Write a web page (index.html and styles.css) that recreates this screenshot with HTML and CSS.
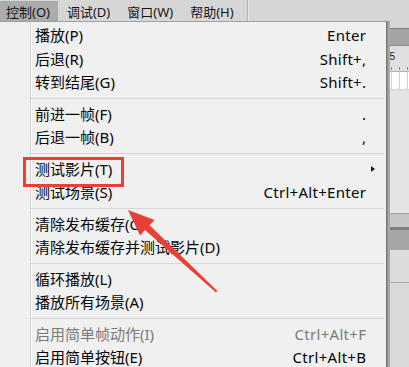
FILE: index.html
```html
<!DOCTYPE html>
<html>
<head>
<meta charset="utf-8">
<link rel="stylesheet" href="styles.css">
</head>
<body>
<div class="app">
  <div class="menubar">
    <div class="mb-item active">控制(O)</div>
    <div class="mb-item">调试(D)</div>
    <div class="mb-item">窗口(W)</div>
    <div class="mb-item">帮助(H)</div>
    <div class="mb-sep"></div>
  </div>
  <div class="workspace">
    <div class="band top"></div>
    <div class="band title"></div>
    <div class="band ruler"><span class="ruler-num">75</span><div class="ticks"></div></div>
    <div class="band cells"></div>
    <div class="band stage"></div>
    <div class="band p1"></div>
    <div class="band p2"></div>
    <div class="band p3"></div>
    <div class="band p4"></div>
  </div>
</div>

<div class="dropdown">
  <div class="item"><span class="label">播放(P)</span><span class="key">Enter</span><span class="sub"></span></div>
  <div class="item"><span class="label">后退(R)</span><span class="key">Shift+,</span><span class="sub"></span></div>
  <div class="item"><span class="label">转到结尾(G)</span><span class="key">Shift+.</span><span class="sub"></span></div>
  <div class="sep"></div>
  <div class="item"><span class="label">前进一帧(F)</span><span class="key">.</span><span class="sub"></span></div>
  <div class="item"><span class="label">后退一帧(B)</span><span class="key">,</span><span class="sub"></span></div>
  <div class="sep"></div>
  <div class="item"><span class="label">测试影片(T)</span><span class="key"></span><span class="sub"><i class="tri"></i></span></div>
  <div class="item"><span class="label">测试场景(S)</span><span class="key">Ctrl+Alt+Enter</span><span class="sub"></span></div>
  <div class="sep"></div>
  <div class="item"><span class="label">清除发布缓存(C)</span><span class="key"></span><span class="sub"></span></div>
  <div class="item"><span class="label">清除发布缓存并测试影片(D)</span><span class="key"></span><span class="sub"></span></div>
  <div class="sep"></div>
  <div class="item"><span class="label">循环播放(L)</span><span class="key"></span><span class="sub"></span></div>
  <div class="item"><span class="label">播放所有场景(A)</span><span class="key"></span><span class="sub"></span></div>
  <div class="sep"></div>
  <div class="item disabled"><span class="label">启用简单帧动作(I)</span><span class="key">Ctrl+Alt+F</span><span class="sub"></span></div>
  <div class="item"><span class="label">启用简单按钮(E)</span><span class="key">Ctrl+Alt+B</span><span class="sub"></span></div>
</div>

<div class="callout"></div>

<svg class="arrow" width="409" height="367" viewBox="0 0 409 367">
  <polygon fill="#ea3f36" points="128,210 154.5,220 149.6,225.2 217.4,291 216,292.6 145,229.9 140,235.5"/>
</svg>
</body>
</html>
```

FILE: styles.css
```css
html, body {
  margin: 0;
  padding: 0;
}
body {
  width: 409px;
  height: 367px;
  overflow: hidden;
  position: relative;
  font-family: "Noto Sans", "Noto Sans CJK SC", sans-serif;
  background: #dcdcdc;
}
.app {
  display: flex;
  flex-direction: column;
  height: 367px;
}
.menubar {
  height: 21px;
  background: #d6d6d6;
  display: flex;
  align-items: stretch;
  font-size: 13px;
  color: #161616;
  gap: 1px;
}
.mb-item {
  padding: 0 8px;
  display: flex;
  align-items: center;
  margin-top: 1px;
  white-space: nowrap;
}
.mb-item:first-child {
  padding-left: 6px;
}
.mb-item.active {
  background: #ababab;
}
.mb-sep {
  width: 1px;
  margin-left: 4px;
  background: #b4b4b4;
  box-shadow: 1px 0 0 #e6e6e6;
}
.workspace {
  flex: 1;
  display: flex;
  flex-direction: column;
}
.band.top {
  height: 7px;
  background: #d6d6d6;
}
.band.title {
  height: 16px;
  background: #a4a4a4;
  border-top: 1px solid #7e7e7e;
  border-bottom: 1px solid #8e8e8e;
}
.band.ruler {
  height: 25px;
  background: #e0e0e0;
  display: flex;
  flex-direction: column;
  justify-content: flex-end;
}
.ruler-num {
  font-family: "Liberation Sans", sans-serif;
  font-size: 10px;
  color: #222;
  padding-left: 384px;
  line-height: 10px;
  margin-bottom: 5px;
}
.ticks {
  height: 3px;
  margin-bottom: 1px;
  background-image: repeating-linear-gradient(to right, transparent 0 7px, #8a8a8a 7px 8px);
}
.band.cells {
  height: 17px;
  background-color: #ffffff;
  border-top: 1px solid #b8b8b8;
  background-image: repeating-linear-gradient(to right, transparent 0 7px, #d0d0d0 7px 8px);
}
.band.stage {
  height: 123px;
  background: #e4e4e4;
  border-top: 1px solid #d2d2d2;
}
.band.p1 {
  height: 13px;
  background: #c6c6c6;
  border-top: 1px solid #a0a0a0;
}
.band.p2 {
  height: 3px;
  background: #7e7e7e;
}
.band.p3 {
  height: 20px;
  background: #a6a6a6;
}
.band.p4 {
  flex: 1;
  background: #dcdcdc;
  background-image: linear-gradient(to bottom, transparent 0 32px, #aaaaaa 32px 33px, #d9d9d9 33px);
}

/* dropdown */
.dropdown {
  position: absolute;
  left: 0;
  top: 21px;
  width: 386px;
  height: 360px;
  border-top: 1px solid #a0a0a0;
  border-right: 1px solid #7a7a7a;
  box-shadow: 1px 0 0 #8c8c8c, 3px 0 0 #a9a9a9;
  padding-top: 2px;
  background: linear-gradient(to right, #f0f0f0 0 30px, #d2d2d2 30px 31px, #fbfbfb 31px 32px, #f0f0f0 32px);
  font-size: 15px;
  color: #050505;
  display: flex;
  flex-direction: column;
}
.item {
  height: 23.5px;
  flex: none;
  display: grid;
  grid-template-columns: 1fr auto 20px;
  align-items: center;
  padding-left: 35px;
  line-height: 22px;
  padding-bottom: 1.5px;
  box-sizing: border-box;
  white-space: nowrap;
}
.key {
  letter-spacing: 0.3px;
  margin-right: -0.3px;
}
.item.disabled {
  color: #7a7a7a;
}
.sub {
  display: flex;
  align-items: center;
  padding-left: 5px;
}
.tri {
  display: block;
  width: 0;
  height: 0;
  border-left: 4px solid #1a1a1a;
  border-top: 3.5px solid transparent;
  border-bottom: 3.5px solid transparent;
  margin-top: 1px;
}
.sep {
  flex: none;
  height: 8px;
  display: flex;
  align-items: center;
  margin-left: 31px;
  margin-right: 2px;
}
.sep::before {
  content: "";
  display: block;
  width: 100%;
  height: 1px;
  background: #d6d6d6;
}

/* annotations */
.callout {
  position: absolute;
  left: 23px;
  top: 157px;
  width: 95px;
  height: 24px;
  border: 3px solid #ea3f36;
}
.arrow {
  position: absolute;
  left: 0;
  top: 0;
  pointer-events: none;
}
```
